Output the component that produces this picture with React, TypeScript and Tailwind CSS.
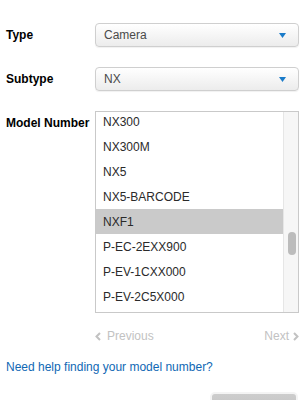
import React from "react";

const items = [
  "NX300",
  "NX300M",
  "NX5",
  "NX5-BARCODE",
  "NXF1",
  "P-EC-2EXX900",
  "P-EV-1CXX000",
  "P-EV-2C5X000",
];

function Caret() {
  return (
    <svg width="7" height="5" viewBox="0 0 7 5" className="shrink-0">
      <path d="M0 0 L7 0 L3.5 5 Z" fill="#1a7bc9" />
    </svg>
  );
}

function Select({ value }: { value: string }) {
  return (
    <div className="flex h-[24px] w-[204px] items-center justify-between rounded-[4px] border border-[#cfcfcf] bg-gradient-to-b from-[#ffffff] to-[#ececec] pl-[8px] pr-[12px] text-[12px] text-[#4a4a4a] shadow-[0_1px_1px_rgba(0,0,0,0.06)]">
      <span>{value}</span>
      <Caret />
    </div>
  );
}

export default function App() {
  return (
    <div
      className="h-[400px] w-[305px] overflow-hidden bg-white"
      style={{ fontFamily: '"Liberation Sans", Arial, sans-serif' }}
    >
      <div className="grid grid-cols-[89px_204px] gap-y-[20px] pl-[6px] pt-[23px]">
        <div className="flex h-[24px] items-center text-[12px] font-bold text-black">Type</div>
        <Select value="Camera" />
        <div className="flex h-[24px] items-center text-[12px] font-bold text-black">Subtype</div>
        <Select value="NX" />
        <div className="pt-[5px] text-[12px] font-bold leading-[14px] text-black">Model Number</div>
        <div className="flex h-[202px] w-[204px] overflow-hidden border border-[#c9c9c9] bg-white">
          <div className="flex-1 overflow-hidden">
            <div className="mt-[-3px]">
              {items.map((it) => (
                <div
                  key={it}
                  className={
                    "flex h-[25px] items-center pl-[7px] text-[12px] text-[#2a2a2a] " +
                    (it === "NXF1" ? "bg-[#cacaca]" : "")
                  }
                >
                  {it}
                </div>
              ))}
            </div>
          </div>
          <div className="relative w-[15px] border-l border-[#e6e6e6] bg-[#f6f6f6]">
            <div className="absolute left-[4px] top-[120px] h-[23px] w-[8px] rounded-[4px] bg-[#bcbcbc]" />
          </div>
        </div>
      </div>
      <div className="ml-[95px] mt-[14px] flex w-[204px] items-center justify-between text-[12px] text-[#c2c2c2]">
        <span className="flex items-center gap-[6px]">
          <svg width="6" height="9" viewBox="0 0 6 9">
            <path d="M5 1 L1.5 4.5 L5 8" stroke="#c2c2c2" strokeWidth="2" fill="none" />
          </svg>
          Previous
        </span>
        <span className="flex items-center gap-[4px]">
          Next
          <svg width="6" height="9" viewBox="0 0 6 9">
            <path d="M1 1 L4.5 4.5 L1 8" stroke="#c2c2c2" strokeWidth="2" fill="none" />
          </svg>
        </span>
      </div>
      <div className="mt-[13px] pl-[6px] text-[12px] text-[#1068b4]">Need help finding your model number?</div>
      <div className="mt-[16px] flex justify-end pr-[7px]">
        <div className="h-[30px] w-[88px] rounded-[5px] border-2 border-[#f4f4f4] bg-gradient-to-b from-[#cdcdcd] to-[#bdbdbd]" />
      </div>
    </div>
  );
}
